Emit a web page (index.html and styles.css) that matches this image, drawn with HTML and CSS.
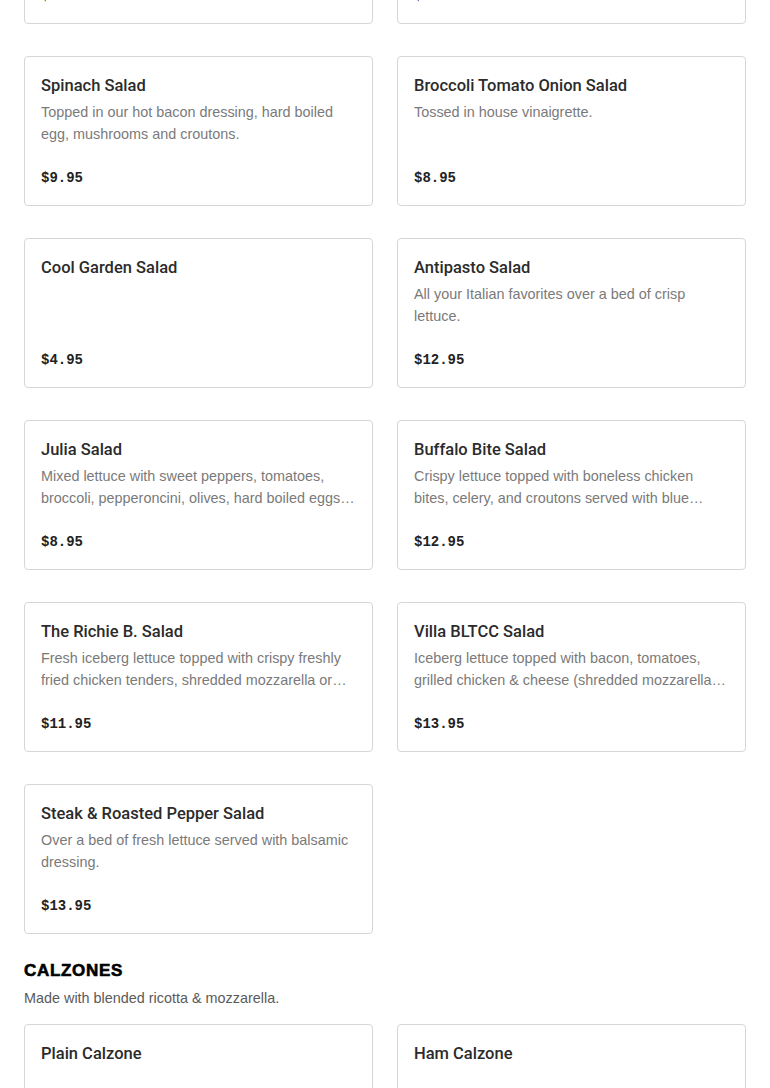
FILE: index.html
```html
<!DOCTYPE html>
<html lang="en">
<head>
<meta charset="utf-8">
<title>Menu</title>
<link rel="stylesheet" href="styles.css">
</head>
<body>
<main class="menu">
  <section class="section">
    <div class="grid">
      <div class="card">
        <h3 class="card-title">Garden Salad</h3>
        <p class="card-desc">Fresh lettuce, tomatoes, cucumbers and onions.</p>
        <div class="card-price">$6.95</div>
      </div>
      <div class="card">
        <h3 class="card-title">Chef Salad</h3>
        <p class="card-desc">Ham, turkey, cheese and egg over crisp lettuce.</p>
        <div class="card-price">$12.95</div>
      </div>
      <div class="card">
        <h3 class="card-title">Spinach Salad</h3>
        <p class="card-desc">Topped in our hot bacon dressing, hard boiled egg, mushrooms and croutons.</p>
        <div class="card-price">$9.95</div>
      </div>
      <div class="card">
        <h3 class="card-title">Broccoli Tomato Onion Salad</h3>
        <p class="card-desc">Tossed in house vinaigrette.</p>
        <div class="card-price">$8.95</div>
      </div>
      <div class="card">
        <h3 class="card-title">Cool Garden Salad</h3>
        <p class="card-desc"></p>
        <div class="card-price">$4.95</div>
      </div>
      <div class="card">
        <h3 class="card-title">Antipasto Salad</h3>
        <p class="card-desc">All your Italian favorites over a bed of crisp lettuce.</p>
        <div class="card-price">$12.95</div>
      </div>
      <div class="card">
        <h3 class="card-title">Julia Salad</h3>
        <p class="card-desc">Mixed lettuce with sweet peppers, tomatoes, broccoli, pepperoncini, olives, hard boiled eggs, and provolone cheese.</p>
        <div class="card-price">$8.95</div>
      </div>
      <div class="card">
        <h3 class="card-title">Buffalo Bite Salad</h3>
        <p class="card-desc">Crispy lettuce topped with boneless chicken bites, celery, and croutons served with blue cheese dressing.</p>
        <div class="card-price">$12.95</div>
      </div>
      <div class="card">
        <h3 class="card-title">The Richie B. Salad</h3>
        <p class="card-desc">Fresh iceberg lettuce topped with crispy freshly fried chicken tenders, shredded mozzarella or provolone cheese.</p>
        <div class="card-price">$11.95</div>
      </div>
      <div class="card">
        <h3 class="card-title">Villa BLTCC Salad</h3>
        <p class="card-desc">Iceberg lettuce topped with bacon, tomatoes, grilled chicken &amp; cheese (shredded mozzarella or provolone).</p>
        <div class="card-price">$13.95</div>
      </div>
      <div class="card">
        <h3 class="card-title">Steak &amp; Roasted Pepper Salad</h3>
        <p class="card-desc">Over a bed of fresh lettuce served with balsamic dressing.</p>
        <div class="card-price">$13.95</div>
      </div>
    </div>
  </section>

  <section class="section">
    <h2 class="section-title">CALZONES</h2>
    <p class="section-desc">Made with blended ricotta &amp; mozzarella.</p>
    <div class="grid">
      <div class="card">
        <h3 class="card-title">Plain Calzone</h3>
        <p class="card-desc"></p>
        <div class="card-price">$9.95</div>
      </div>
      <div class="card">
        <h3 class="card-title">Ham Calzone</h3>
        <p class="card-desc"></p>
        <div class="card-price">$11.95</div>
      </div>
    </div>
  </section>
</main>
</body>
</html>
```

FILE: styles.css
```css
* { box-sizing: border-box; }
html, body { margin: 0; padding: 0; background: #fff; }
body {
  font-family: "Liberation Sans", Arial, sans-serif;
  color: #2a2a2a;
  overflow: hidden;
}
.menu {
  padding: 0 24px;
  margin-top: -126px;
  display: flex;
  flex-direction: column;
  gap: 26px;
}
.grid {
  display: grid;
  grid-template-columns: 1fr 1fr;
  column-gap: 24px;
  row-gap: 32px;
}
.card {
  height: 150px;
  border: 1px solid #d6d6d6;
  border-radius: 4px;
  padding: 16px;
  display: flex;
  flex-direction: column;
}
.card-title {
  margin: 0 0 3px;
  font-family: Roboto, "Liberation Sans", Arial, sans-serif;
  font-size: 16.5px;
  line-height: 25px;
  font-weight: 500;
  color: #2b2b2b;
}
.card-desc {
  margin: 0;
  font-size: 14.4px;
  line-height: 22px;
  color: #7a7a7a;
  display: -webkit-box;
  -webkit-line-clamp: 2;
  -webkit-box-orient: vertical;
  overflow: hidden;
}
.card-price {
  margin-top: auto;
  font-family: "Liberation Mono", "Courier New", monospace;
  font-weight: 700;
  font-size: 14px;
  line-height: 22px;
  color: #222;
}
.section-title {
  margin: 0;
  font-size: 17px;
  line-height: 22px;
  font-weight: 900;
  letter-spacing: 0.7px;
  -webkit-text-stroke: 0.6px #000;
  color: #000;
}
.section-desc {
  margin: 5px 0 15px;
  font-size: 14.4px;
  line-height: 22px;
  color: #5a5a5a;
}
```
